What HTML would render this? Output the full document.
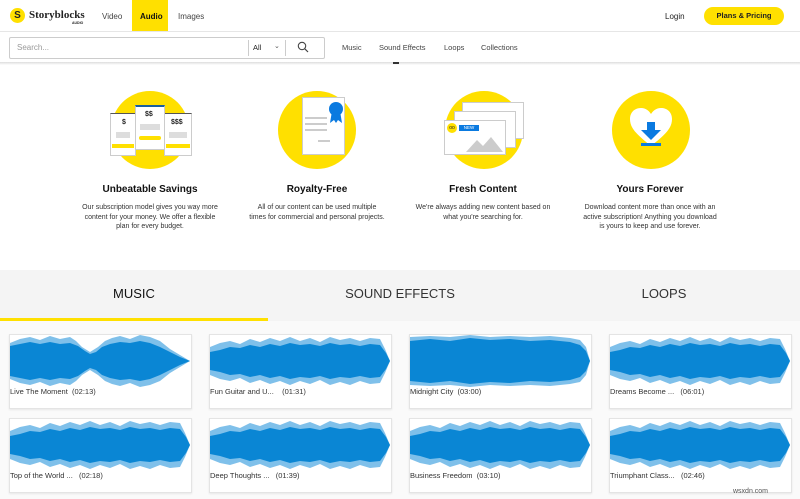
<!DOCTYPE html>
<html><head><meta charset="utf-8"><style>
*{box-sizing:border-box;margin:0;padding:0}
body{width:800px;height:499px;overflow:hidden;background:#fff;font-family:"Liberation Sans",sans-serif;color:#222;position:relative}
.a{position:absolute}
.nav{font-size:8px;color:#444}
.circ{width:78px;height:78px;border-radius:50%;background:#ffe000}
.t{font-weight:bold;font-size:10px;text-align:center;width:200px;color:#111}
.d{font-size:7px;line-height:9.5px;text-align:center;width:200px;color:#333}
.card{width:183px;height:75px;background:#fff;border:1px solid #e4e4e4;box-shadow:0 1px 2px rgba(0,0,0,.08)}
.card span{position:absolute;left:0px;top:52px;font-size:7.5px;color:#333;white-space:pre}
.card svg{position:absolute;left:0;top:0}
</style></head><body>
<svg width="0" height="0" style="position:absolute">
<defs>
<g id="wA">
<polygon fill="#7fc0ea" points="0,8 10,4 20,2 30,5 40,1 50,4 60,2 66,6 72,12 80,17 88,12 95,6 102,3 110,1 120,4 130,0 140,2 150,6 160,14 170,20 180,26 170,32 160,38 150,46 140,50 130,52 120,48 110,51 102,49 95,46 88,40 80,35 72,40 66,46 60,50 50,48 40,51 30,47 20,50 10,48 0,44"/>
<polygon fill="#0a86d4" points="0,11 10,9 20,7 30,9 40,7 50,9 60,8 68,11 75,16 80,19 86,17 92,12 100,9 110,7 120,8 130,6 140,8 150,12 160,17 170,22 180,26 170,30 160,35 150,40 140,44 130,46 120,44 110,45 100,43 92,40 86,35 80,33 75,36 68,41 60,44 50,43 40,45 30,43 20,45 10,43 0,41"/>
</g>
<g id="wB">
<polygon fill="#7fc0ea" points="0,12 10,8 20,6 30,9 40,4 50,7 60,3 70,6 80,2 90,6 100,3 110,7 120,2 130,5 140,3 150,6 160,3 170,4 175,14 180,26 175,38 170,48 160,49 150,46 140,50 130,47 120,50 110,45 100,49 90,46 80,50 70,46 60,49 50,45 40,48 30,43 20,46 10,44 0,40"/>
<polygon fill="#0a86d4" points="0,17 10,15 20,12 30,13 40,10 50,12 60,9 70,11 80,8 90,10 100,9 110,11 120,8 130,10 140,9 150,11 160,9 170,10 176,18 180,26 176,34 170,42 160,43 150,41 140,43 130,42 120,44 110,41 100,43 90,42 80,44 70,41 60,43 50,40 40,42 30,39 20,40 10,37 0,35"/>
</g>
<g id="wC">
<polygon fill="#7fc0ea" points="0,2 20,1 40,2 60,0 80,2 100,1 120,2 140,1 160,3 170,5 176,12 180,26 176,40 170,47 160,49 140,51 120,50 100,51 80,50 60,52 40,50 20,51 0,50"/>
<polygon fill="#0a86d4" points="0,6 20,4 40,6 60,3 80,5 100,4 120,6 140,5 160,7 170,10 176,16 180,26 176,36 170,42 160,45 140,47 120,46 100,48 80,47 60,49 40,46 20,48 0,46"/>
</g>
</defs></svg>
<!-- header -->
<div class="a" style="left:10px;top:8px;width:15px;height:15px;border-radius:50%;background:#ffe000;font-weight:bold;font-size:10px;text-align:center;line-height:15px">S</div>
<div class="a" style="left:29px;top:9px;font-family:'Liberation Serif',serif;font-weight:bold;font-size:11px">Storyblocks</div>
<div class="a" style="left:72px;top:21px;font-size:3.5px;font-weight:bold">AUDIO</div>
<div class="a nav" style="left:102px;top:12px">Video</div>
<div class="a" style="left:132px;top:0;width:36px;height:32px;background:#ffe000"></div>
<div class="a nav" style="left:140px;top:12px;font-weight:bold;color:#111">Audio</div>
<div class="a nav" style="left:178px;top:12px">Images</div>
<div class="a nav" style="left:665px;top:12px;color:#222">Login</div>
<div class="a" style="left:704px;top:7px;width:80px;height:18px;border-radius:9px;background:#ffe000;font-size:7.5px;font-weight:bold;text-align:center;line-height:18px">Plans &amp; Pricing</div>
<div class="a" style="left:0;top:31px;width:800px;height:1px;background:#e6e6e6"></div>
<div class="a" style="left:9px;top:37px;width:316px;height:22px;border:1px solid #ccc;border-radius:2px"></div>
<div class="a" style="left:17px;top:43px;font-size:8px;color:#999">Search...</div>
<div class="a" style="left:248px;top:40px;width:1px;height:16px;background:#ccc"></div>
<div class="a" style="left:253px;top:43px;font-size:7.5px">All</div>
<div class="a" style="left:274px;top:42px;font-size:7px;color:#555">&#8964;</div>
<div class="a" style="left:285px;top:40px;width:1px;height:16px;background:#ccc"></div>
<svg class="a" style="left:297px;top:41px" width="12" height="12"><circle cx="5" cy="5" r="3.7" fill="none" stroke="#444" stroke-width="1.1"/><line x1="7.7" y1="7.7" x2="11" y2="11" stroke="#444" stroke-width="1.2"/></svg>
<div class="a nav" style="left:342px;top:43px;font-size:7.5px">Music</div>
<div class="a nav" style="left:379px;top:43px;font-size:7.5px">Sound Effects</div>
<div class="a nav" style="left:444px;top:43px;font-size:7.5px">Loops</div>
<div class="a nav" style="left:481px;top:43px;font-size:7.5px">Collections</div>
<div class="a" style="left:0;top:62px;width:800px;height:3px;background:linear-gradient(#ddd,#fff)"></div>
<div class="a" style="left:393px;top:62px;width:6px;height:2px;background:#333"></div>
<!-- features -->
<div class="a circ" style="left:111px;top:91px"></div>
<div class="a" style="left:110px;top:113px;width:26px;height:43px;background:#fff;border:1px solid #ccc;border-top:1px solid #555"><div style="font-size:7px;font-weight:bold;margin:5px 0 0 11px">$</div><div style="margin:6px 5px 0;height:6px;background:#ddd"></div><div style="margin:6px 1px 0;height:4px;background:#ffe000"></div></div>
<div class="a" style="left:164px;top:113px;width:28px;height:43px;background:#fff;border:1px solid #ccc;border-top:1px solid #555"><div style="font-size:7px;font-weight:bold;margin:5px 0 0 6px">$$$</div><div style="margin:6px 4px 0;height:6px;background:#ddd"></div><div style="margin:6px 1px 0;height:4px;background:#ffe000"></div></div>
<div class="a" style="left:135px;top:105px;width:30px;height:45px;background:#fff;border:1px solid #ccc;border-top:2px solid #1a5f9e"><div style="font-size:7px;font-weight:bold;margin:4px 0 0 9px">$$</div><div style="margin:6px 4px 0;height:6px;background:#ddd"></div><div style="margin:6px 3px 0;height:4px;background:#ffe000;border-radius:2px"></div></div>
<div class="a circ" style="left:278px;top:91px"></div>
<div class="a" style="left:302px;top:97px;width:43px;height:58px;background:#fff;border:1px solid #ccc"><div style="margin:19px 0 0 2px;width:22px;height:2px;background:#ccc"></div><div style="margin:4px 0 0 2px;width:22px;height:2px;background:#ccc"></div><div style="margin:4px 0 0 2px;width:22px;height:2px;background:#ccc"></div><div style="margin:9px 0 0 15px;width:12px;height:2px;background:#ccc"></div></div>
<svg class="a" style="left:327px;top:101px" width="18" height="24"><path d="M5 10 L3 22 L7 19 L9 22 L11 19 L15 22 L13 10Z" fill="#0a7ae0"/><circle cx="9" cy="8" r="7" fill="#0a7ae0"/></svg>
<div class="a circ" style="left:445px;top:91px"></div>
<div class="a" style="left:462px;top:102px;width:62px;height:37px;background:#fff;border:1px solid #ccc"></div>
<div class="a" style="left:454px;top:111px;width:62px;height:37px;background:#fff;border:1px solid #ccc"></div>
<div class="a" style="left:444px;top:120px;width:62px;height:35px;background:#fff;border:1px solid #ccc">
<div class="a" style="left:2px;top:2px;width:10px;height:10px;border-radius:50%;background:#ffe000;font-size:5px;line-height:10px;text-align:center">oo</div>
<div class="a" style="left:14px;top:4px;width:20px;height:6px;background:#0a7ae0;color:#fff;font-size:4.5px;text-align:center;line-height:6px">NEW</div>
<svg class="a" style="left:20px;top:14px" width="40" height="18"><path d="M1 17 L12 5 L18 11 L26 2 L38 17Z" fill="#ccc"/></svg></div>
<div class="a circ" style="left:612px;top:91px"></div>
<svg class="a" style="left:628px;top:106px" width="46" height="46"><path d="M23 40 C8 28 2 22 2 13 C2 6 7 2 13 2 C18 2 21 5 23 8 C25 5 28 2 33 2 C39 2 44 6 44 13 C44 22 38 28 23 40Z" fill="#fff"/><rect x="19" y="16" width="8" height="9" fill="#0a7ae0"/><path d="M13 24 L33 24 L23 34Z" fill="#0a7ae0"/><rect x="13" y="37" width="20" height="3" fill="#0a7ae0"/></svg>
<div class="a t" style="left:50px;top:184px">Unbeatable Savings</div>
<div class="a d" style="left:50px;top:203px">Our subscription model gives you way more<br>content for your money. We offer a flexible<br>plan for every budget.</div>
<div class="a t" style="left:217px;top:184px">Royalty-Free</div>
<div class="a d" style="left:217px;top:203px">All of our content can be used multiple<br>times for commercial and personal projects.</div>
<div class="a t" style="left:383px;top:184px">Fresh Content</div>
<div class="a d" style="left:383px;top:203px">We're always adding new content based on<br>what you're searching for.</div>
<div class="a t" style="left:550px;top:184px">Yours Forever</div>
<div class="a d" style="left:550px;top:203px">Download content more than once with an<br>active subscription! Anything you download<br>is yours to keep and use forever.</div>
<!-- tabs -->
<div class="a" style="left:0;top:270px;width:800px;height:52px;background:#f4f4f4"></div>
<div class="a" style="left:0;top:318px;width:268px;height:3px;background:#ffe000"></div>
<div class="a" style="left:0;top:286px;width:268px;text-align:center;font-size:13px;color:#111">MUSIC</div>
<div class="a" style="left:266px;top:286px;width:268px;text-align:center;font-size:13px;color:#333">SOUND EFFECTS</div>
<div class="a" style="left:530px;top:286px;width:268px;text-align:center;font-size:13px;color:#333">LOOPS</div>
<div class="a" style="left:0;top:321px;width:800px;height:178px;background:#fafafa"></div>
<!-- cards -->
<div class="a card" style="left:9px;top:334px"><svg width="183" height="52"><use href="#wA"/></svg><span>Live The Moment  (02:13)</span></div>
<div class="a card" style="left:209px;top:334px"><svg width="183" height="52"><use href="#wB"/></svg><span>Fun Guitar and U...    (01:31)</span></div>
<div class="a card" style="left:409px;top:334px"><svg width="183" height="52"><use href="#wC"/></svg><span>Midnight City  (03:00)</span></div>
<div class="a card" style="left:609px;top:334px"><svg width="183" height="52"><use href="#wB"/></svg><span>Dreams Become ...   (06:01)</span></div>
<div class="a card" style="left:9px;top:418px"><svg width="183" height="52"><use href="#wB"/></svg><span>Top of the World ...   (02:18)</span></div>
<div class="a card" style="left:209px;top:418px"><svg width="183" height="52"><use href="#wB"/></svg><span>Deep Thoughts ...   (01:39)</span></div>
<div class="a card" style="left:409px;top:418px"><svg width="183" height="52"><use href="#wB"/></svg><span>Business Freedom  (03:10)</span></div>
<div class="a card" style="left:609px;top:418px"><svg width="183" height="52"><use href="#wB"/></svg><span>Triumphant Class...   (02:46)</span></div>
<div class="a" style="left:733px;top:488px;font-size:7px;color:#555">wsxdn.com</div>
</body></html>
